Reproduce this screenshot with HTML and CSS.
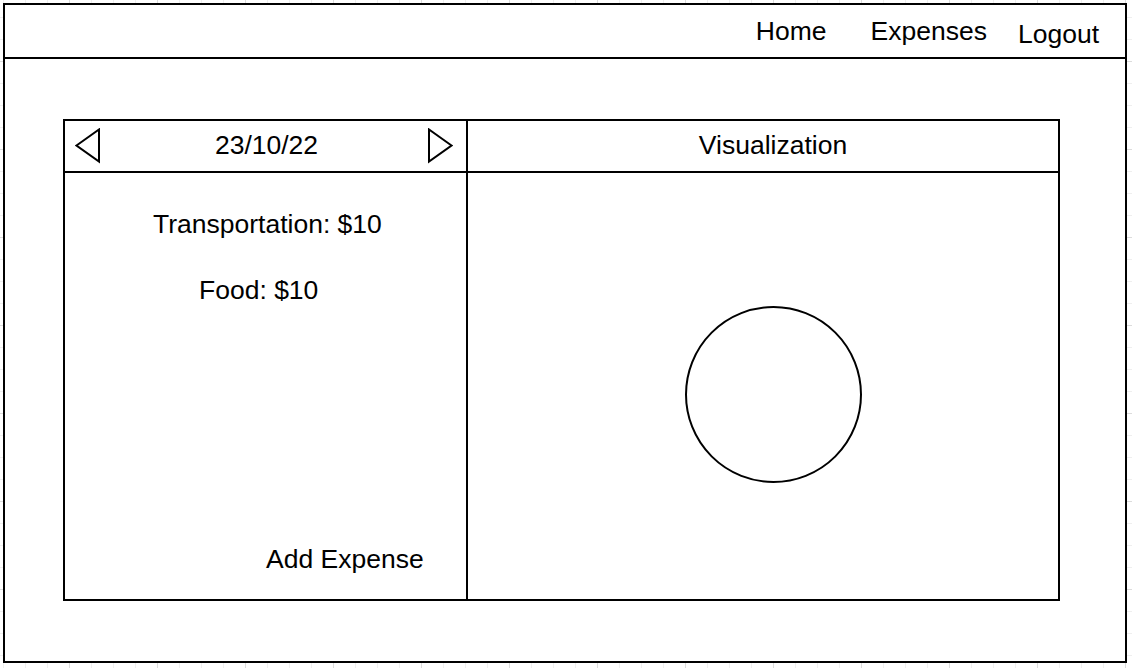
FILE: index.html
```html
<!DOCTYPE html>
<html lang="en">
<head>
<meta charset="utf-8">
<title>Expenses</title>
<link rel="stylesheet" href="styles.css">
</head>
<body>
<div class="frame">
  <header class="topbar">
    <nav class="nav">
      <a class="nav-link nav-home">Home</a>
      <a class="nav-link nav-expenses">Expenses</a>
      <a class="nav-link nav-logout">Logout</a>
    </nav>
  </header>
  <main class="content">
    <section class="board">
      <div class="date-bar">
        <svg class="tri" width="26" height="36" viewBox="0 0 26 36"><polygon points="1.5,17.5 24,1.5 24,33.5" fill="none" stroke="#000" stroke-width="2" stroke-linejoin="miter"/></svg>
        <span class="date">23/10/22</span>
        <svg class="tri" width="26" height="36" viewBox="0 0 26 36"><polygon points="24.5,17.5 2,1.5 2,33.5" fill="none" stroke="#000" stroke-width="2" stroke-linejoin="miter"/></svg>
      </div>
      <div class="viz-bar">Visualization</div>
      <div class="list">
        <p class="item item-transport">Transportation: $10</p>
        <p class="item item-food">Food: $10</p>
        <p class="item add">Add Expense</p>
      </div>
      <div class="viz">
        <div class="circle"></div>
      </div>
    </section>
  </main>
</div>
</body>
</html>
```
FILE: styles.css
```css
html, body {
  margin: 0;
  padding: 0;
}
body {
  width: 1132px;
  height: 668px;
  overflow: hidden;
  font-family: "Liberation Sans", Arial, Helvetica, sans-serif;
  font-size: 26.5px;
  line-height: 30px;
  color: #000;
  background-color: #fff;
  background-image:
    linear-gradient(to right, #dcdcdc 1px, transparent 1px),
    linear-gradient(to bottom, #dcdcdc 1px, transparent 1px),
    linear-gradient(to right, #efefef 1px, transparent 1px),
    linear-gradient(to bottom, #efefef 1px, transparent 1px);
  background-size: 88px 88px, 88px 88px, 22px 22px, 22px 22px;
  background-position: 69px 61px, 69px 61px, 3px 17px, 3px 17px;
  padding: 3px 0 0 3px;
  box-sizing: border-box;
}
.frame {
  width: 1124px;
  height: 660px;
  border: 2px solid #000;
  box-sizing: border-box;
  background: #fff;
  display: flex;
  flex-direction: column;
}
.topbar {
  height: 54px;
  border-bottom: 2px solid #000;
  box-sizing: border-box;
  flex: none;
}
.nav {
  display: flex;
  justify-content: flex-end;
  align-items: flex-start;
  padding: 11px 26px 0 0;
}
.nav-link {
  display: block;
  color: #000;
  text-decoration: none;
}
.nav-expenses {
  margin-left: 44px;
}
.nav-logout {
  margin-left: 31px;
  margin-top: 3px;
}
.content {
  flex: 1;
  padding: 60px 0 0 58px;
}
.board {
  width: 997px;
  height: 482px;
  border: 2px solid #000;
  box-sizing: border-box;
  display: grid;
  grid-template-columns: 403px 1fr;
  grid-template-rows: 52px 1fr;
}
.date-bar {
  border-right: 2px solid #000;
  border-bottom: 2px solid #000;
  display: flex;
  align-items: center;
  justify-content: space-between;
  padding: 0 13px 0 10px;
}
.tri {
  display: block;
  margin-top: -1px;
}
.date {
  margin-left: 5px;
  margin-bottom: 2px;
}
.viz-bar {
  border-bottom: 2px solid #000;
  display: flex;
  align-items: center;
  justify-content: center;
  padding: 0 0 2px 20px;
}
.list {
  border-right: 2px solid #000;
  display: flex;
  flex-direction: column;
  align-items: flex-start;
}
.item {
  margin: 0;
}
.item-transport {
  margin: 36px 0 0 88px;
}
.item-food {
  margin: 36px 0 0 134px;
}
.add {
  margin: auto 0 25px 201px;
}
.viz {
  display: flex;
  align-items: center;
  justify-content: center;
  padding: 16px 0 0 20px;
}
.circle {
  width: 177px;
  height: 177px;
  border: 2px solid #000;
  border-radius: 50%;
  box-sizing: border-box;
}
```
